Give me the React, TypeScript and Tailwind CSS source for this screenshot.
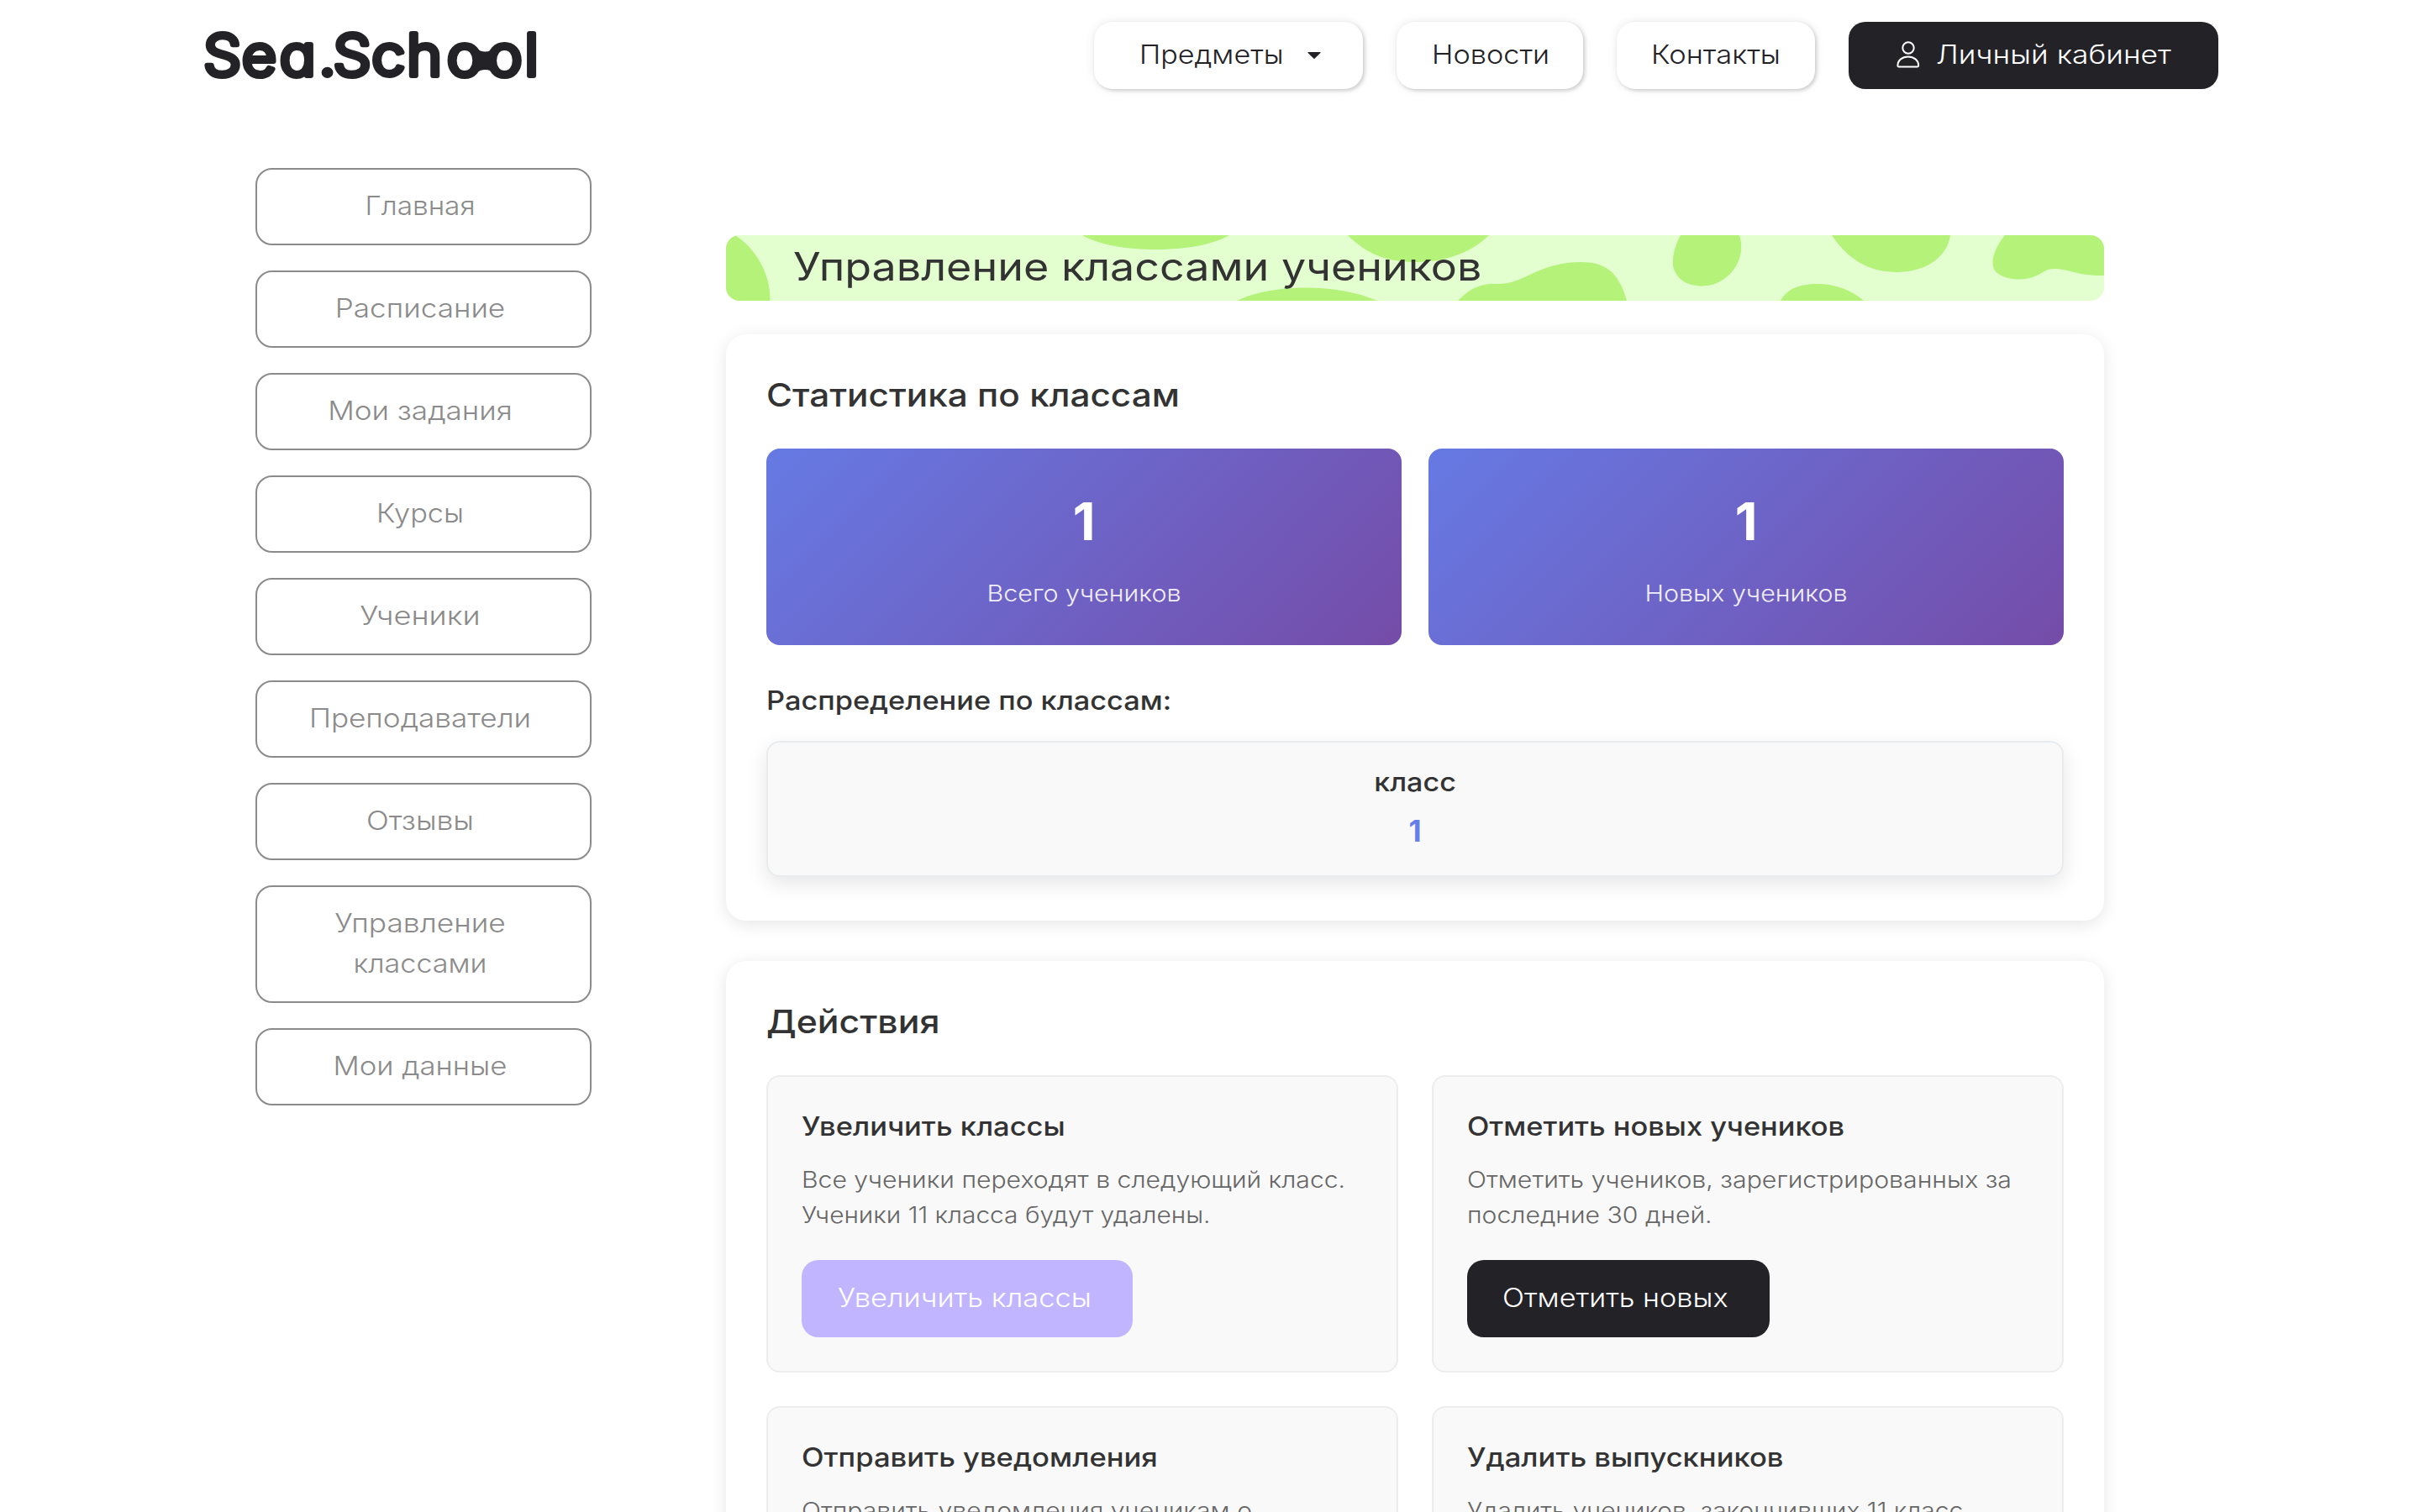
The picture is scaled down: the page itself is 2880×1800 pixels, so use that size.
import React from 'react';

interface Line {
    text: string;
    className: string;
}

interface Action {
    title: string;
    titleClass: string;
    description: Line[];
    button?: Line;
    buttonClass?: string;
}

const menu: Line[][] = [
    [{ text: 'Главная', className: 'scale-x-[1.076]' }],
    [{ text: 'Расписание', className: 'scale-x-[1.132]' }],
    [{ text: 'Мои задания', className: 'scale-x-[1.132]' }],
    [{ text: 'Курсы', className: 'scale-x-[1.107]' }],
    [{ text: 'Ученики', className: 'scale-x-[1.168]' }],
    [{ text: 'Преподаватели', className: 'scale-x-[1.132]' }],
    [{ text: 'Отзывы', className: 'scale-x-[1.138]' }],
    [
        { text: 'Управление', className: 'scale-x-[1.139]' },
        { text: 'классами', className: 'scale-x-[1.1]' },
    ],
    [{ text: 'Мои данные', className: 'scale-x-[1.119]' }],
];

const stats = [
    { value: 1, label: 'Всего учеников' },
    { value: 1, label: 'Новых учеников' },
];

const actions: Action[] = [
    {
        title: 'Увеличить классы',
        titleClass: 'scale-x-[1.113]',
        description: [
            { text: 'Все ученики переходят в следующий класс.', className: 'scale-x-[1.116]' },
            { text: 'Ученики 11 класса будут удалены.', className: 'scale-x-[1.106]' },
        ],
        button: { text: 'Увеличить классы', className: 'scale-x-[1.113]' },
        buttonClass: 'w-[394px] bg-[#c2b5ff] pl-[43px]',
    },
    {
        title: 'Отметить новых учеников',
        titleClass: 'scale-x-[1.109]',
        description: [
            { text: 'Отметить учеников, зарегистрированных за', className: 'scale-x-[1.121]' },
            { text: 'последние 30 дней.', className: 'scale-x-[1.117]' },
        ],
        button: { text: 'Отметить новых', className: 'scale-x-[1.105]' },
        buttonClass: 'w-[360px] bg-[#232227] pl-[42px]',
    },
    {
        title: 'Отправить уведомления',
        titleClass: 'scale-x-[1.116]',
        description: [{ text: 'Отправить уведомления ученикам о', className: 'scale-x-[1.118]' }],
    },
    {
        title: 'Удалить выпускников',
        titleClass: 'scale-x-[1.116]',
        description: [{ text: 'Удалить учеников, закончивших 11 класс', className: 'scale-x-[1.108]' }],
    },
];

const Logo: React.FC = () => (
    <svg className="h-[60px] w-[400px] overflow-visible" viewBox="240 36 400 60" fill="#232227">
        <text
            x="230.6 274 316.8 361.5 377.6 421.3 461 506.4 551.6 594.6"
            y="90"
            transform="scale(1.05 1)"
            fontSize="68"
            stroke="#232227"
            strokeWidth="6"
            strokeLinejoin="round"
            className="font-['Inter',sans-serif] font-light [font-feature-settings:'cv11']"
        >
            Sea.School
        </text>
        {/* bridge that turns the two "o" into glasses */}
        <path d="M567 57 C572 63 583 63 588 57 V87 C583 81.5 572 81.5 567 87 Z" />
    </svg>
);

const UserIcon: React.FC = () => (
    <svg className="h-8 w-7" viewBox="0 0 28 32" fill="none" stroke="#fff" strokeWidth="2" strokeLinejoin="round">
        <circle cx="14" cy="8" r="6.7" />
        <path d="M1.4 29 C1.4 22.5 7 18.6 13.8 18.6 S26.2 22.5 26.2 29 Q26.2 30.4 24.8 30.4 H2.8 Q1.4 30.4 1.4 29 Z" />
    </svg>
);

const navButton = 'flex h-20 items-center rounded-[22px] bg-white pb-0.5 shadow-[2px_2px_4px_rgba(0,0,0,0.16),0_0_12px_rgba(0,0,0,0.09)]';

const Header: React.FC = () => (
    <header className="flex items-start justify-between px-60 pt-[26px]">
        <div className="pt-[10px]">
            <Logo />
        </div>
        <nav className="flex gap-10 text-[31px] font-light text-[#232227]">
            <a className={`${navButton} w-[320px] pl-[54px]`}>
                <span className="w-[200px] origin-left scale-x-[1.1]">Предметы</span>
                <svg className="mt-0.5 h-2 w-4" viewBox="0 0 16 8" fill="#232227">
                    <path d="M0.8 0 H15.2 Q16 0.3 15.4 1 L8.8 7.6 Q8 8.2 7.2 7.6 L0.6 1 Q0 0.3 0.8 0 Z" />
                </svg>
            </a>
            <a className={`${navButton} w-[222px] pl-[42px]`}>
                <span className="origin-left scale-x-[1.106]">Новости</span>
            </a>
            <a className={`${navButton} w-[236px] pl-[41px]`}>
                <span className="origin-left scale-x-[1.114]">Контакты</span>
            </a>
            <a className="flex h-20 w-[440px] items-center gap-[19px] rounded-[20px] bg-[#232227] pb-0.5 pl-[57px] text-white">
                <UserIcon />
                <span className="origin-left scale-x-[1.1425]">Личный кабинет</span>
            </a>
        </nav>
    </header>
);

const Sidebar: React.FC = () => (
    <aside className="flex w-[400px] flex-col gap-[30px]">
        {menu.map((lines) => (
            <a
                key={lines[0].text}
                className="rounded-[20px] border-2 border-[#8b8b8b] pt-[19px] pr-2 pb-[21px] text-center text-[31px] leading-[48px] font-light text-[#8b8b8b]"
            >
                {lines.map((line) => (
                    <span key={line.text} className={`block ${line.className}`}>
                        {line.text}
                    </span>
                ))}
            </a>
        ))}
    </aside>
);

const Banner: React.FC = () => (
    <div className="relative flex h-[78px] items-center overflow-hidden rounded-2xl bg-[#e3ffd0] pb-1 pl-20">
        <svg className="absolute inset-0 h-[78px] w-[1640px]" viewBox="0 0 1640 78" fill="#b5f27a">
            <path d="M8 -2 C34 14 53 44 52.5 78 H0 V0 Z" />
            <path d="M424 0 C445 12 478 17 511 17 C548 17 580 11 599 0 Z" />
            <path d="M740 0 C762 22 785 32 822 32 C860 32 890 18 908 0 Z" />
            <path d="M608 78 C630 67 660 62.5 690 62.5 C722 62.5 752 68 775 78 Z" />
            <path d="M871 78 C885 63 900 57 915 58 C950 60 965 32 1018 32 C1052 32 1064 50 1072 78 Z" />
            <path d="M1136 0 C1129 13 1126 25 1127 36 C1130 52 1143 60.5 1162 60.5 C1190 60.5 1216 32 1206 0 Z" />
            <path d="M1316 0 C1334 27 1358 44 1394 44 C1430 44 1454 24 1457 0 Z" />
            <path d="M1255 78 C1262 64 1278 58 1298 58 C1322 58 1340 66 1354 78 Z" />
            <path d="M1522 0 C1509 16 1502 36 1513 45 C1524 54 1546 55 1560 48 C1570 43 1572 40 1580 40 C1598 40 1610 49 1640 48 V0 Z" />
        </svg>
        <h1 className="relative origin-left scale-x-[1.131] text-[46px] text-[#333]">Управление классами учеников</h1>
    </div>
);

const card = 'rounded-3xl bg-white px-12 pt-12 shadow-[0_4px_20px_rgba(0,0,0,0.1)]';

const Statistics: React.FC = () => (
    <section className={`${card} mt-10 pb-[52px]`}>
        <h2 className="origin-left scale-x-[1.099] text-[38.5px] leading-[48px] font-medium">Статистика по классам</h2>
        <div className="mt-10 grid grid-cols-2 gap-8">
            {stats.map((stat) => (
                <div
                    key={stat.label}
                    className="h-[234px] rounded-2xl bg-[linear-gradient(135deg,#667ae4_0%,#754ca8_100%)] pt-[47px] text-center text-white"
                >
                    <div className="text-[62px] leading-[80px] font-bold">{stat.value}</div>
                    <div className="mt-[25px] scale-x-[1.127] text-[27px] leading-[42px] font-light opacity-90">{stat.label}</div>
                </div>
            ))}
        </div>
        <h3 className="mt-[42px] origin-left scale-x-[1.108] text-[31px] leading-[48px] font-medium">Распределение по классам:</h3>
        <div className="mt-6 h-[162px] rounded-2xl border-2 border-[#e9ecef] bg-[#f9f9f9] pt-[27px] text-center shadow-[0_8px_24px_rgba(0,0,0,0.1)]">
            <div className="scale-x-[1.1] text-[31px] leading-[40px] font-medium">класс</div>
            <div className="mt-[17px] text-[35px] leading-[42px] font-bold text-[#667eea]">1</div>
        </div>
    </section>
);

const ActionCard: React.FC<{ action: Action }> = ({ action }) => (
    <div className="h-[354px] rounded-2xl border-2 border-[#ededed] bg-[#f9f9f9] px-10 pt-[39px]">
        <h3 className={`w-[600px] origin-left text-[31px] leading-[40px] font-medium ${action.titleClass}`}>{action.title}</h3>
        <p className="mt-[23px] text-[27px] leading-[42px] font-light whitespace-nowrap text-[#666]">
            {action.description.map((line) => (
                <span key={line.text} className={`block w-[600px] origin-left ${line.className}`}>
                    {line.text}
                </span>
            ))}
        </p>
        {action.button && (
            <button className={`mt-8 flex h-[92px] items-center rounded-[20px] pb-0.5 text-[31px] font-light text-white ${action.buttonClass}`}>
                <span className={`origin-left ${action.button.className}`}>{action.button.text}</span>
            </button>
        )}
    </div>
);

const App: React.FC = () => {
    return (
        <div className="h-[1800px] w-[2880px] overflow-hidden bg-white font-['Inter',sans-serif] text-[#333]">
            <Header />
            <div className="flex items-start gap-40 pt-[94px] pl-[304px]">
                <Sidebar />
                <main className="w-[1640px] pt-20">
                    <Banner />
                    <Statistics />
                    <section className={`${card} mt-12 pb-12`}>
                        <h2 className="origin-left scale-x-[1.111] text-[38.5px] leading-[48px] font-medium">Действия</h2>
                        <div className="mt-10 grid grid-cols-2 gap-10">
                            {actions.map((action) => (
                                <ActionCard key={action.title} action={action} />
                            ))}
                        </div>
                    </section>
                </main>
            </div>
        </div>
    );
};

export default App;
